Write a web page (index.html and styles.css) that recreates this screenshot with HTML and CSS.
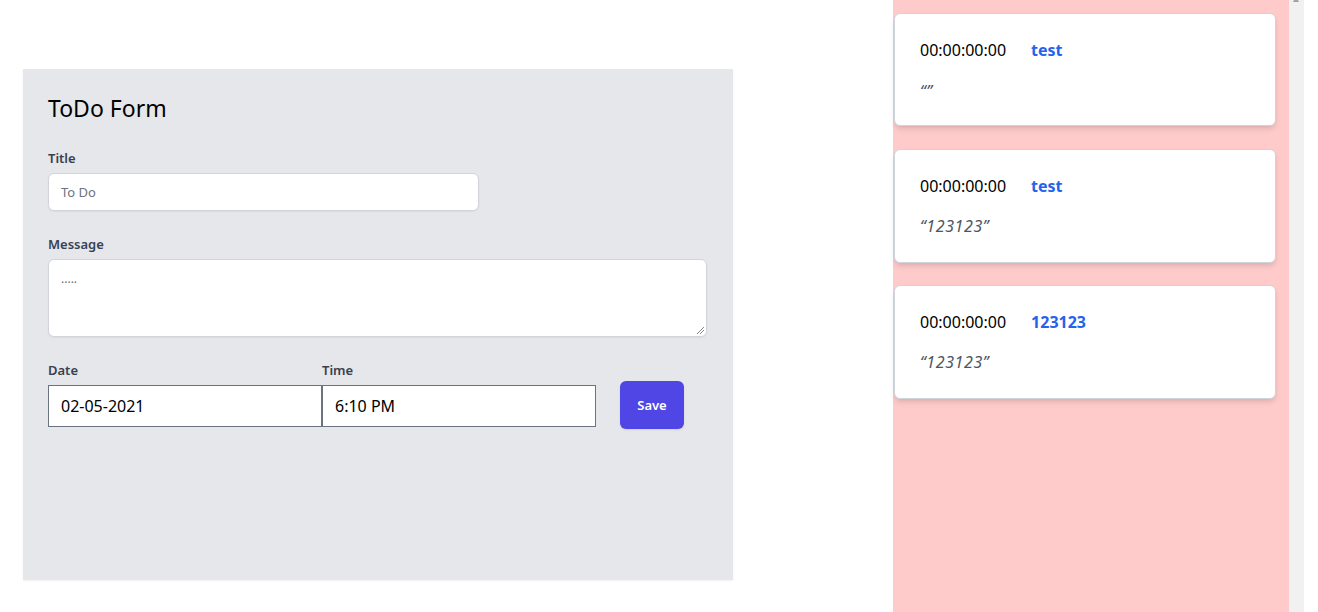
FILE: index.html
```html
<!DOCTYPE html>
<html lang="en">
<head>
<meta charset="utf-8">
<title>ToDo</title>
<link rel="stylesheet" href="styles.css">
</head>
<body>
<div class="page">
  <main class="left">
    <section class="panel">
      <h1 class="panel-title">ToDo Form</h1>
      <div class="field">
        <label class="label">Title</label>
        <div class="input title-input">To Do</div>
      </div>
      <div class="field">
        <label class="label">Message</label>
        <div class="textarea"><span class="placeholder">.....</span><span class="resize"></span></div>
      </div>
      <div class="row">
        <div class="field-dt">
          <label class="label">Date</label>
          <div class="dt-input">02-05-2021</div>
        </div>
        <div class="field-dt">
          <label class="label">Time</label>
          <div class="dt-input">6:10 PM</div>
        </div>
        <button class="save">Save</button>
      </div>
    </section>
  </main>
  <aside class="list">
    <div class="cards">
      <article class="card card-first">
        <div class="card-head"><span class="time">00:00:00:00</span><span class="name">test</span></div>
        <p class="quote">“”</p>
      </article>
      <article class="card">
        <div class="card-head"><span class="time">00:00:00:00</span><span class="name">test</span></div>
        <p class="quote">“123123”</p>
      </article>
      <article class="card">
        <div class="card-head"><span class="time">00:00:00:00</span><span class="name">123123</span></div>
        <p class="quote">“123123”</p>
      </article>
    </div>
    <div class="scrollbar"><span class="arrow"></span></div>
  </aside>
</div>
</body>
</html>
```
FILE: styles.css
```css
* { box-sizing: border-box; }
html, body { margin: 0; padding: 0; }
body {
  font-family: "Noto Sans", "Open Sans", sans-serif;
  background: #ffffff;
  color: #000;
  width: 1318px;
  height: 612px;
  overflow: hidden;
}
.page {
  display: flex;
  height: 612px;
}
.left {
  width: 893px;
  padding: 69px 0 0 23px;
}
.panel {
  width: 710px;
  height: 511px;
  background: #e5e7eb;
  box-shadow: 0 1px 2px rgba(0,0,0,0.06);
  padding: 25px 25px 0 25px;
}
.panel-title {
  margin: 0;
  font-size: 23px;
  font-weight: 400;
  line-height: 28px;
  color: #000;
}
.field {
  margin-top: 27px;
}
.field + .field { margin-top: 24px; }
.label {
  display: block;
  font-size: 13px;
  font-weight: 600;
  color: #374151;
  line-height: 18px;
  margin-bottom: 6px;
}
.input {
  width: 431px;
  height: 38px;
  background: #fff;
  border: 1px solid #d1d5db;
  border-radius: 6px;
  box-shadow: 0 1px 2px rgba(0,0,0,0.05);
  padding: 0 12px;
  font-size: 13px;
  line-height: 36px;
  color: #6b7280;
}
.textarea {
  position: relative;
  width: 659px;
  height: 78px;
  background: #fff;
  border: 1px solid #d1d5db;
  border-radius: 6px;
  box-shadow: 0 1px 2px rgba(0,0,0,0.05);
  padding: 8px 12px;
  font-size: 13px;
  line-height: 20px;
  color: #6b7280;
}
.placeholder { font-size: 12px; }
.resize {
  position: absolute;
  right: 2px;
  bottom: 2px;
  width: 7px;
  height: 7px;
  background: linear-gradient(135deg, transparent 45%, #888 45%, #888 52%, transparent 52%, transparent 70%, #888 70%, #888 77%, transparent 77%);
}
.row {
  display: flex;
  align-items: flex-end;
  margin-top: 24px;
}
.dt-input {
  width: 274px;
  height: 42px;
  background: #fff;
  border: 1px solid #6b7280;
  padding: 0 12px;
  font-size: 16px;
  line-height: 40px;
  color: #000;
}
.save {
  margin-left: 24px;
  margin-bottom: -2px;
  width: 64px;
  height: 48px;
  border: none;
  border-radius: 6px;
  background: #4f46e5;
  color: #fff;
  font-family: inherit;
  font-size: 13px;
  font-weight: 600;
  box-shadow: 0 1px 2px rgba(0,0,0,0.1);
}
.list {
  display: flex;
  width: 411px;
  height: 612px;
}
.cards {
  width: 396px;
  background: #fecaca;
  padding: 13px 0 0 1px;
}
.card {
  width: 382px;
  height: 114px;
  background: #fff;
  border: 1px solid #cfd3da;
  border-radius: 6px;
  box-shadow: 0 4px 6px -1px rgba(0,0,0,0.1), 0 2px 4px -1px rgba(0,0,0,0.06);
  padding: 24px 0 0 25px;
  margin-bottom: 22px;
}
.card-first { height: 113px; margin-bottom: 23px; }
.card-head {
  display: flex;
  gap: 25px;
  line-height: 24px;
  font-size: 16px;
}
.time { color: #000; }
.name { color: #2563eb; font-weight: 700; }
.quote {
  margin: 16px 0 0 0;
  font-size: 16px;
  line-height: 24px;
  font-style: italic;
  letter-spacing: 0.6px;
  color: #4b5563;
}
.card-first .quote { margin-top: 17px; }
.scrollbar {
  position: relative;
  width: 15px;
  height: 612px;
  background: #f1f1f1;
}
.arrow {
  position: absolute;
  left: 4px;
  top: -4px;
  width: 0;
  height: 0;
  border-left: 3.5px solid transparent;
  border-right: 3.5px solid transparent;
  border-bottom: 6px solid #a3a3a3;
}
```
